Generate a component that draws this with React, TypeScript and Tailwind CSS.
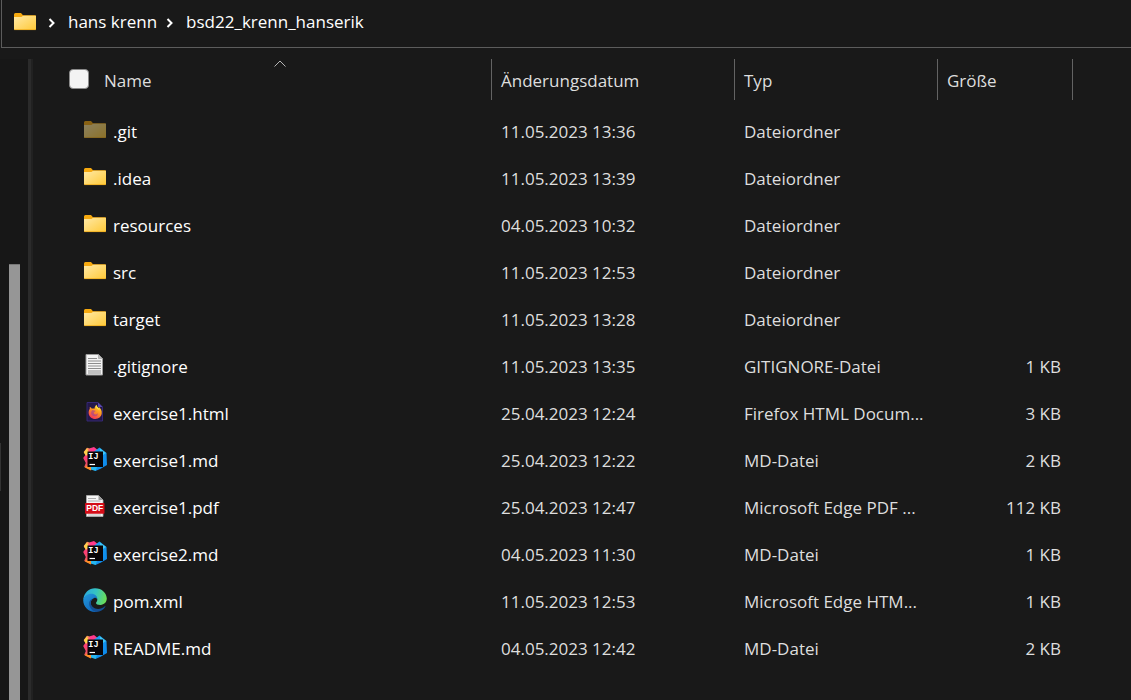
import type { ReactNode } from 'react';

type IconKind = 'folder' | 'hidden' | 'text' | 'firefox' | 'idea' | 'pdf' | 'edge';

interface Entry {
  name: string;
  date: string;
  type: string;
  size?: string;
  icon: IconKind;
}

const entries: Entry[] = [
  { name: '.git', date: '11.05.2023 13:36', type: 'Dateiordner', icon: 'hidden' },
  { name: '.idea', date: '11.05.2023 13:39', type: 'Dateiordner', icon: 'folder' },
  { name: 'resources', date: '04.05.2023 10:32', type: 'Dateiordner', icon: 'folder' },
  { name: 'src', date: '11.05.2023 12:53', type: 'Dateiordner', icon: 'folder' },
  { name: 'target', date: '11.05.2023 13:28', type: 'Dateiordner', icon: 'folder' },
  { name: '.gitignore', date: '11.05.2023 13:35', type: 'GITIGNORE-Datei', size: '1 KB', icon: 'text' },
  { name: 'exercise1.html', date: '25.04.2023 12:24', type: 'Firefox HTML Docum...', size: '3 KB', icon: 'firefox' },
  { name: 'exercise1.md', date: '25.04.2023 12:22', type: 'MD-Datei', size: '2 KB', icon: 'idea' },
  { name: 'exercise1.pdf', date: '25.04.2023 12:47', type: 'Microsoft Edge PDF ...', size: '112 KB', icon: 'pdf' },
  { name: 'exercise2.md', date: '04.05.2023 11:30', type: 'MD-Datei', size: '1 KB', icon: 'idea' },
  { name: 'pom.xml', date: '11.05.2023 12:53', type: 'Microsoft Edge HTM...', size: '1 KB', icon: 'edge' },
  { name: 'README.md', date: '04.05.2023 12:42', type: 'MD-Datei', size: '2 KB', icon: 'idea' },
];

function Gradients() {
  return (
    <svg className="absolute size-0" aria-hidden="true">
      <defs>
        <linearGradient id="folder" x1="0" y1="0" x2="1" y2="1">
          <stop offset="0" stopColor="#ffe9a6" />
          <stop offset="1" stopColor="#ffc937" />
        </linearGradient>
        <linearGradient id="flame" x1="0.8" y1="0" x2="0.3" y2="1">
          <stop offset="0" stopColor="#ffe23e" />
          <stop offset="0.45" stopColor="#ff9a1f" />
          <stop offset="1" stopColor="#f5305a" />
        </linearGradient>
        <linearGradient id="ideaWarm" x1="0" y1="0" x2="0.3" y2="1">
          <stop offset="0" stopColor="#fdb14e" />
          <stop offset="0.4" stopColor="#fe3d78" />
          <stop offset="0.7" stopColor="#ef4a6a" />
          <stop offset="1" stopColor="#ff8a2b" />
        </linearGradient>
        <linearGradient id="ideaCool" x1="0" y1="0" x2="1" y2="1">
          <stop offset="0" stopColor="#1fa8f5" />
          <stop offset="1" stopColor="#0a84e8" />
        </linearGradient>
        <linearGradient id="edgeTop" x1="0" y1="0.3" x2="1" y2="0.5">
          <stop offset="0" stopColor="#2ba8de" />
          <stop offset="0.5" stopColor="#35c3c3" />
          <stop offset="1" stopColor="#6bdd55" />
        </linearGradient>
        <linearGradient id="edgeSide" x1="0" y1="0" x2="0.6" y2="1">
          <stop offset="0" stopColor="#2499dc" />
          <stop offset="1" stopColor="#1069bd" />
        </linearGradient>
      </defs>
    </svg>
  );
}

function FolderShape() {
  return (
    <>
      <path d="M1 4.5Q1 3 2.4 3H8l2 2.2h12q1 0 1 1V12H1z" fill="#f6a90f" />
      <path d="M1 7h7.4l1.8-1.2H23V19q0 1-1 1H2q-1 0-1-1z" fill="url(#folder)" />
      <path d="M1.2 19.6h21.6" stroke="#eda91c" strokeWidth="0.8" />
    </>
  );
}

const drawings: Record<IconKind, ReactNode> = {
  folder: <FolderShape />,
  hidden: (
    <g opacity="0.5">
      <FolderShape />
    </g>
  ),
  text: (
    <>
      <path d="M3 1.500h12.500l4 4v16.500H3z" fill="#f4f4f4" stroke="#9b9b9b" />
      <path d="M15.500 1.500v4h4z" fill="#bdbdbd" stroke="#9b9b9b" strokeWidth="0.6" />
      <path d="M5 5.500h9M5 8h13M5 10.500h13M5 13h13M5 15.500h13M5 18h13M5 20h13" stroke="#8c8c8c" strokeWidth="1" />
    </>
  ),
  firefox: (
    <>
      <path d="M4 2.500h11l4.500 4.500v14H4z" fill="#241849" stroke="#382a7c" strokeWidth="0.9" />
      <path d="M15 2.500v4.500h4.500z" fill="#5a49b0" />
      <g transform="translate(-0.8 -0.8) scale(1.05)">
        <path d="M7.200 7.500c.8.1 1.500.7 2 1.500.9-.3 1.800-.2 2.500.2.1-1.900.8-3.200 2-4 .1 1.600 1.200 2.300 2.200 3.300.1-.5 0-.8-.2-1.200 2.200 1.600 3.200 4 2.900 6.300-.4 3-2.900 5.200-6.100 5.200-3.500 0-6.400-2.500-6.400-6 0-1.800.6-2.900 1.100-3.500z" fill="url(#flame)" />
        <path d="M9.400 10.200c1 .1 1.600.6 2.800.6.8 0 .6 1-.6 1.500-.7.3-.9.900-.4 1.500.8 1.200 2.900.8 3.600-.7.3 1.700-.7 2.900-2.200 3.200-2.100.4-4.400-1.400-4.100-3.900z" fill="#9c3c9c" opacity="0.6" />
        <path d="M13.600 5.500c0 2 2.500 2.800 3.300 5.300-1.400-1.600-4.700-2-3.300-5.300z" fill="#fff04a" />
      </g>
    </>
  ),
  idea: (
    <>
      <path d="M0.700 5 4 .8l7.500 2L9 20l-1 3.500-6.800-3.500 1.600-4L.2 11l2.200-3z" fill="url(#ideaWarm)" />
      <path d="M.8 5.200 4 1.200l2 4.800-3 3z" fill="#ffd24b" />
      <path d="M7 1.300 11 0l4 3.300-3 4H6z" fill="#ff3a8c" />
      <path d="m10.500 5 6-4.500L23.500 6 24 18l-6 3.500-5.500 2.500L8 20z" fill="url(#ideaCool)" />
      <path d="m17 1.500 6 4.500-3 2-3-4z" fill="#40c8f6" />
      <path d="m7 19 7 1-1.500 4-4.700-1.500z" fill="#27b7ee" />
      <path d="M3.500 19H8v4.200L2 20.400z" fill="#ff8f28" />
      <rect x="4.500" y="4.500" width="15.500" height="15.500" fill="#090507" />
      <text x="5.300" y="12" fill="#ffffff" fontSize="8.500" fontWeight="700" fontFamily="Liberation Mono, monospace">IJ</text>
      <path d="M6.500 17.500h5.500" stroke="#ffffff" strokeWidth="1.200" />
    </>
  ),
  pdf: (
    <>
      <path d="M3.500 1.500h12L20 6v16.500H3.500z" fill="#f5f5f5" stroke="#b1b1b1" strokeWidth="0.8" />
      <path d="M15.500 1.500V6H20z" fill="#9b9b9b" />
      <path d="M5 4.500h8M5 7h12.500" stroke="#aeaeae" strokeWidth="1" />
      <path d="M5 21h13" stroke="#aeaeae" strokeWidth="0.8" />
      <rect x="2" y="9" width="19.500" height="10.800" rx="0.8" fill="#d40d18" />
      <text x="11.800" y="17.400" textAnchor="middle" fill="#ffffff" fontSize="8.500" fontWeight="700" fontFamily="Liberation Sans, sans-serif">PDF</text>
    </>
  ),
  edge: (
    <>
      <path d="M.3 11.5C1 4.5 6 .2 12 .2c7 0 11.8 5 11.8 10.4 0 3.8-2.8 6.3-6.3 6.3-3 0-4.5-1-4.5-2 0-.7 1.3-1.3 1.3-3.2 0-2.7-2.3-5-6-5C4.8 6.700 2 8.500.3 11.500z" fill="url(#edgeTop)" />
      <path d="M.2 12C1 8.200 4.500 5.800 8.300 5.800c4 0 6 2.700 6 5.600-.8-1.200-1.800-1.700-3-1.500-2.300.5-3.800 3-3.500 5.800.4 3.500 3 6.500 6.700 7.900C7.500 25.500.2 20 .2 12z" fill="url(#edgeSide)" />
      <path d="M9.500 10.700c-2.600 2.500-2 6 .1 8.100 3.400 3.200 8.400 2.700 12.300-.5.4-.3.800.1.500.5-2.200 3.200-5.300 5-8.700 5.100C8.500 22.800 6 18.800 6.200 15.200c.1-2 1.300-3.700 3.300-4.500z" fill="#144f94" />
    </>
  ),
};

function FileIcon({ kind }: { kind: IconKind }) {
  return (
    <svg viewBox="0 0 24 24" className="size-6 shrink-0" aria-hidden="true">
      {drawings[kind]}
    </svg>
  );
}

function Chevron() {
  return (
    <svg viewBox="0 0 8 10" className="mt-0.5 h-2.5 w-2 shrink-0" fill="none" stroke="#ffffff" strokeWidth="2" aria-hidden="true">
      <path d="m1.500 1 4 4-4 4" />
    </svg>
  );
}

function HeaderCell({ label, last = false }: { label: string; last?: boolean }) {
  return (
    <th scope="col" className="p-0 align-top font-normal">
      <button
        type="button"
        className={`flex h-[41px] w-full items-center border-[#636363] pb-px pl-[9px] pt-1 ${last ? 'border-x' : 'border-l'}`}
      >
        {label}
      </button>
    </th>
  );
}

export default function App() {
  return (
    <div className="flex min-h-screen flex-col overflow-hidden bg-[#191919] font-['Open_Sans','Noto_Sans',sans-serif] text-[17px] leading-6 text-[#dedede]">
      <Gradients />
      <nav aria-label="Pfad" className="ml-px flex h-12 items-center border-b border-l border-[#5c5c5c] pb-1 pl-[11px] text-white">
        <FileIcon kind="folder" />
        <ol className="flex items-center">
          <li className="flex items-center gap-3 pl-[11px]">
            <Chevron />
            <a href="#hans-krenn">hans krenn</a>
          </li>
          <li className="flex items-center gap-3 pl-[9px]">
            <Chevron />
            <a href="#bsd22">bsd22_krenn_hanserik</a>
          </li>
        </ol>
      </nav>

      <div className="flex flex-1 pt-[11px]">
        <aside className="flex w-7 shrink-0 bg-[#171717]">
          <div className="mt-96 h-12 w-px bg-[#333333]" />
          <div className="ml-2 mt-[205px] w-[11px] border-t border-[#777777] bg-[#969696]" />
        </aside>
        <div className="w-[5px] shrink-0 border-x-2 border-l-[#2b2b2b] border-r-[#212121] bg-[#2b2b2b]" />

        <main className="min-w-0 flex-1 pl-9">
          <table className="w-full table-fixed border-collapse text-left">
            <colgroup>
              <col className="w-[422px]" />
              <col className="w-[243px]" />
              <col className="w-[203px]" />
              <col className="w-[136px]" />
              <col />
            </colgroup>
            <thead>
              <tr className="h-[49px]">
                <th scope="col" className="p-0 align-top font-normal">
                  <div className="relative flex h-[41px] items-center gap-[15px] pb-px">
                    <input
                      type="checkbox"
                      aria-label="Alle auswählen"
                      className="size-5 shrink-0 appearance-none rounded border border-[#8a8a8a] bg-[#f3f3f3] checked:bg-[#4cc2ff]"
                    />
                    <button type="button" className="flex-1 pt-1 text-left">Name</button>
                    <svg viewBox="0 0 12 7" className="absolute left-1/2 top-px h-[7px] w-3 -translate-x-1/2" fill="none" stroke="#b5b5b5" aria-hidden="true">
                      <path d="m.5 6.500 5.500-5.500 5.500 5.500" />
                    </svg>
                  </div>
                </th>
                <HeaderCell label="Änderungsdatum" />
                <HeaderCell label="Typ" />
                <HeaderCell label="Größe" last />
                <td />
              </tr>
            </thead>
            <tbody>
              {entries.map((entry) => (
                <tr key={entry.name} className="h-[47px]">
                  <td className="p-0">
                    <div className="flex items-center gap-1.5 pl-3.5 text-white">
                      <span className="pb-1">
                        <FileIcon kind={entry.icon} />
                      </span>
                      <span>{entry.name}</span>
                    </div>
                  </td>
                  <td className="whitespace-nowrap py-0 pl-2.5 pr-0">{entry.date}</td>
                  <td className="whitespace-nowrap py-0 pl-2.5 pr-0">{entry.type}</td>
                  <td className="whitespace-nowrap py-0 pl-0 pr-3 text-right">{entry.size}</td>
                  <td />
                </tr>
              ))}
            </tbody>
          </table>
        </main>
      </div>
    </div>
  );
}
